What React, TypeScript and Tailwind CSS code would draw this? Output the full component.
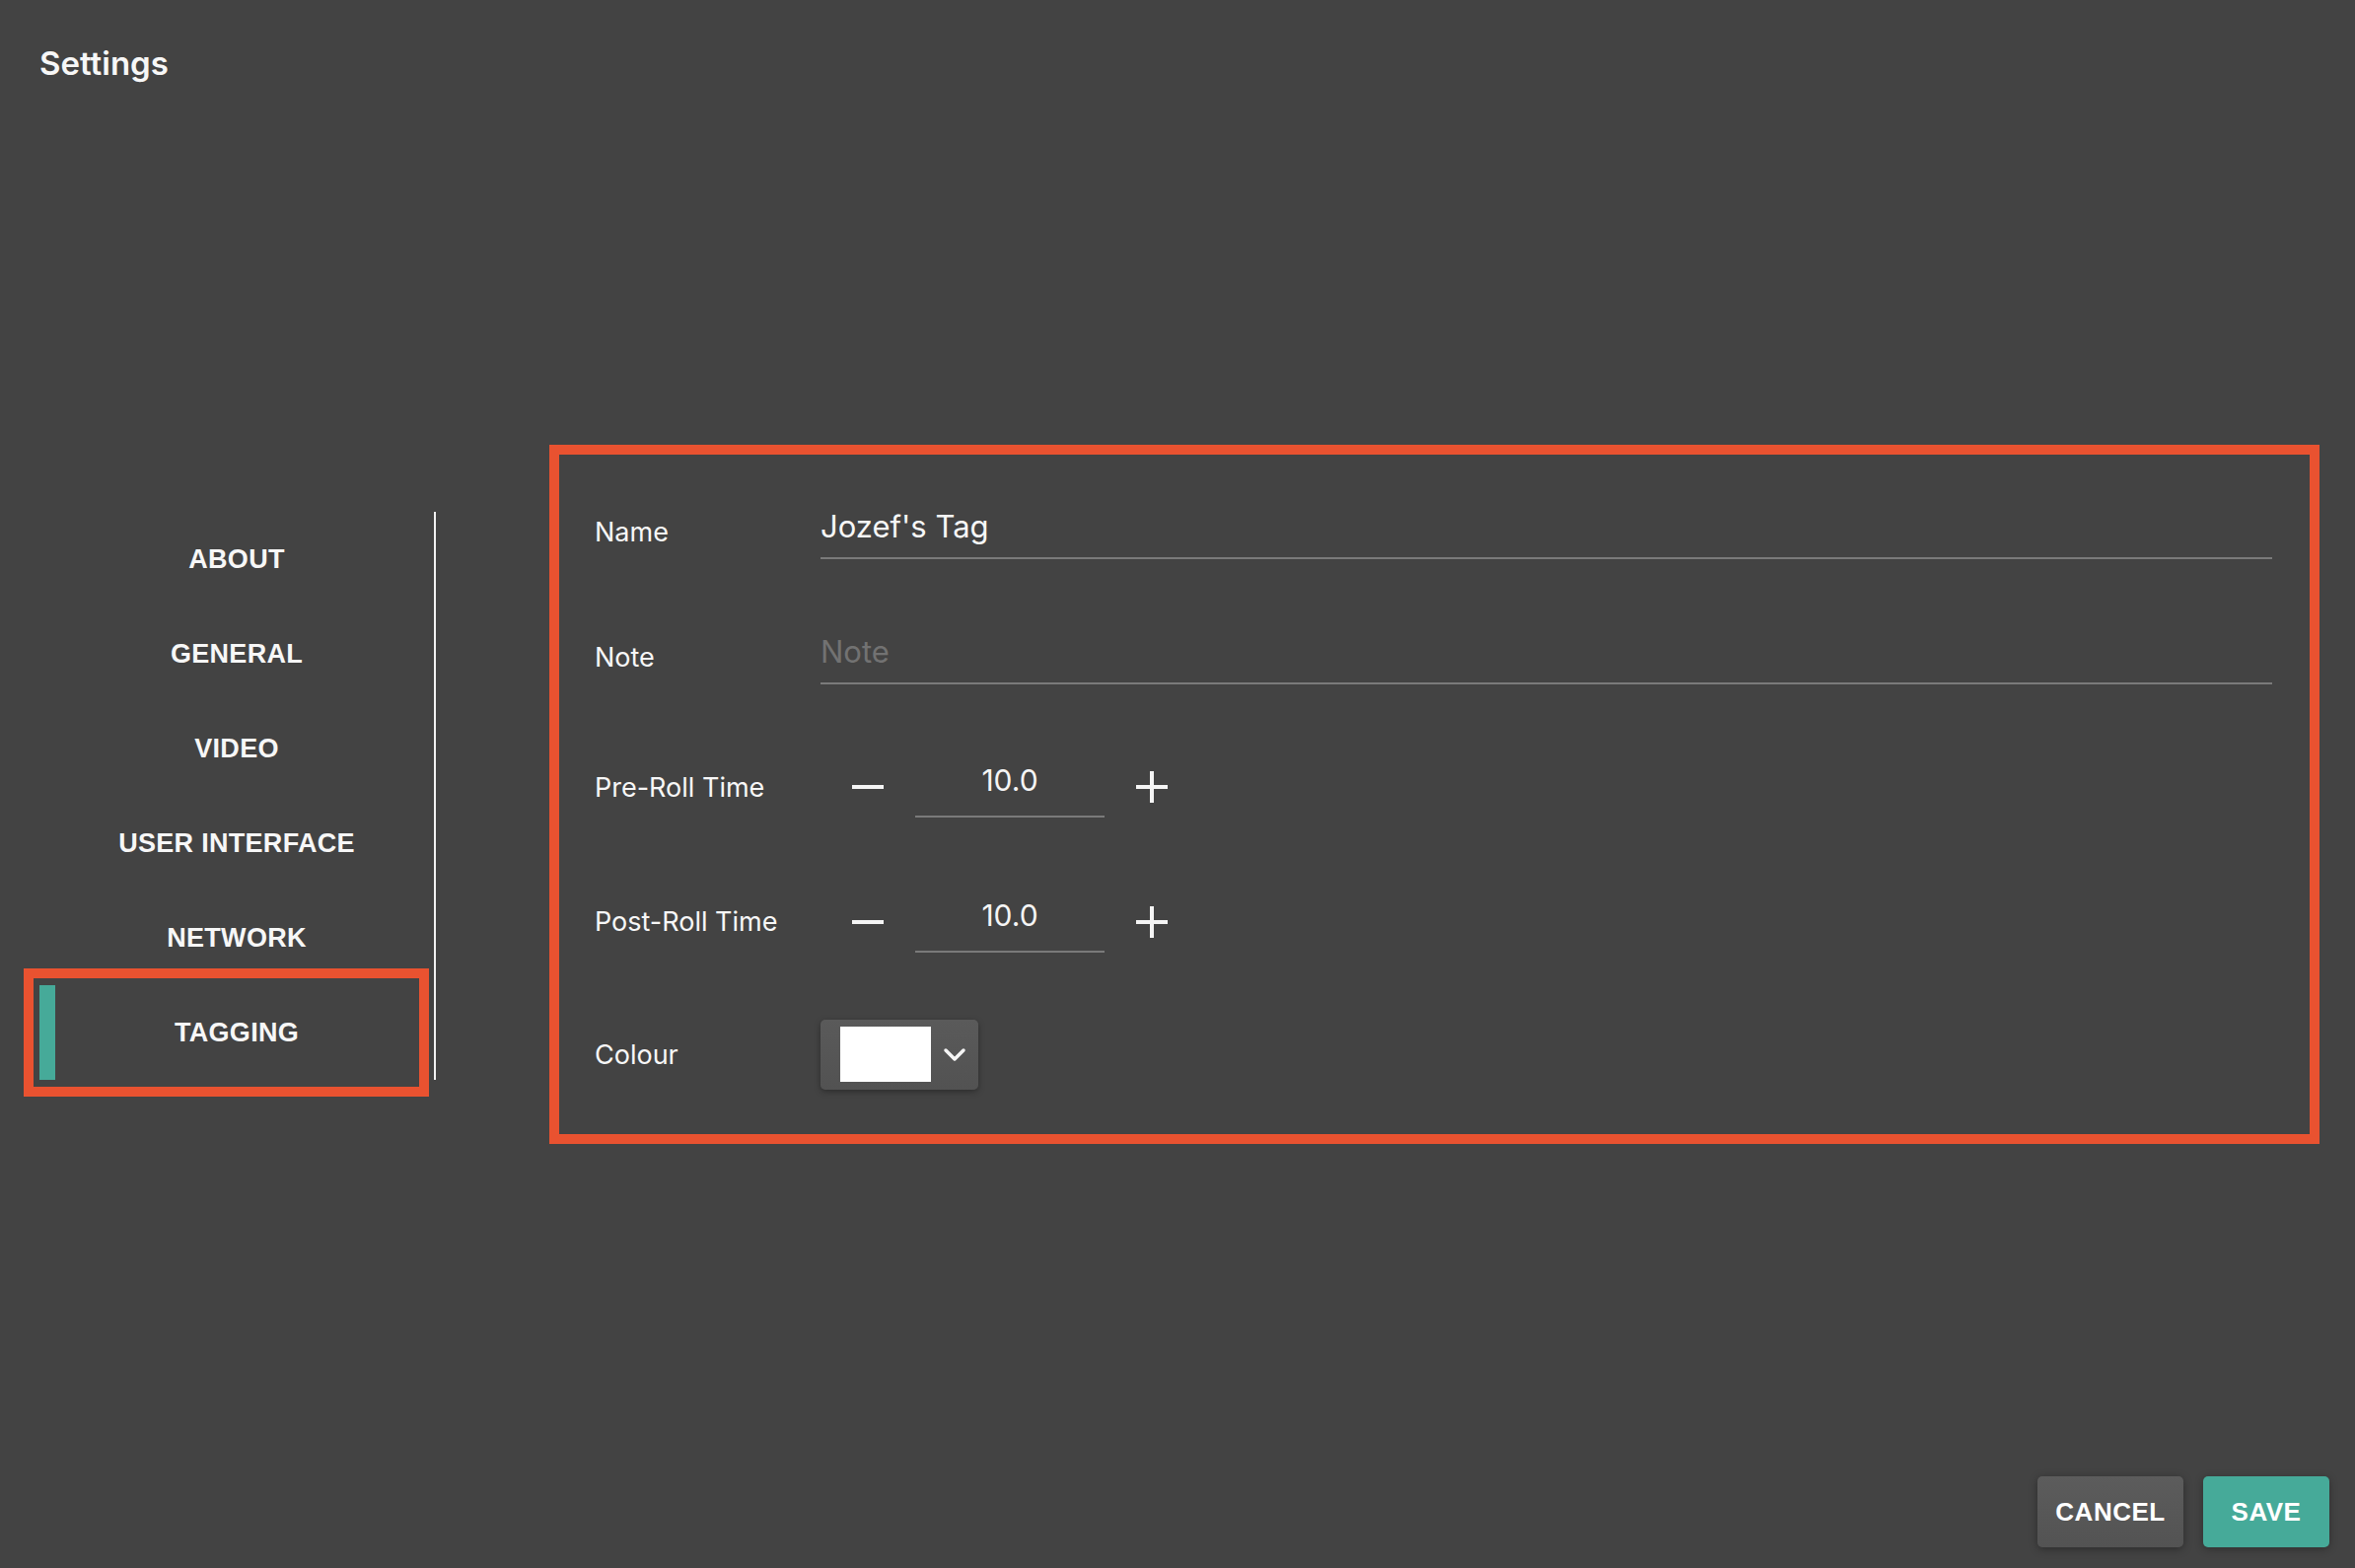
import React from "react";

const navItems = ["ABOUT", "GENERAL", "VIDEO", "USER INTERFACE", "NETWORK", "TAGGING"];

function Minus() {
  return <div className="h-[4px] w-[32px] bg-[#f5f5f5]" />;
}

function Plus() {
  return (
    <div className="relative h-[32px] w-[32px]">
      <div className="absolute left-0 top-[14px] h-[4px] w-[32px] bg-[#f5f5f5]" />
      <div className="absolute left-[14px] top-0 h-[32px] w-[4px] bg-[#f5f5f5]" />
    </div>
  );
}

function Stepper({ value }: { value: string }) {
  return (
    <div className="flex items-center">
      <div className="ml-[32px]">
        <Minus />
      </div>
      <div className="ml-[32px] w-[192px] border-b-2 border-[#7a7a7a] pb-[16px] pt-[3px] text-center text-[30px] leading-[40px] text-[#f5f5f5]">
        {value}
      </div>
      <div className="ml-[32px]">
        <Plus />
      </div>
    </div>
  );
}

export default function App() {
  const inter = { fontFamily: "Inter, 'Noto Sans', sans-serif" };
  const arial = { fontFamily: "'Liberation Sans', Arial, sans-serif" };
  return (
    <div className="flex h-[1590px] w-[2388px] flex-col overflow-hidden bg-[#434343] text-[#f7f7f7]" style={inter}>
      <div className="px-[40px] pt-[44px] text-[33px] font-semibold leading-[40px]">Settings</div>

      <div className="mt-[367px] flex items-start pl-[40px] pr-[36px]">
        <nav className="mt-[68px] w-[402px] border-r-2 border-[#f2f2f2]" style={arial}>
          {navItems.map((item) => (
            <div
              key={item}
              className="relative flex h-[96px] items-center justify-center text-[27px] font-bold tracking-[0.3px]"
            >
              {item === "TAGGING" && (
                <>
                  <div className="absolute bottom-0 left-0 top-0 w-[16px] bg-[#46aa99]" />
                  <div className="pointer-events-none absolute left-[-16px] top-[-17px] h-[130px] w-[411px] border-[10px] border-[#e95230]" />
                </>
              )}
              <span className="pt-[1px]">{item}</span>
            </div>
          ))}
        </nav>

        <div className="ml-[115px] flex flex-1 flex-col border-[10px] border-[#e95230] pb-[16px] pl-[36px] pr-[38px] pt-[15px]">
          <div className="flex h-[128px] items-center">
            <div className="w-[229px] text-[27px] leading-[32px]">Name</div>
            <div className="flex-1 border-b-2 border-[#7a7a7a] pb-[11px] text-[31px] leading-[40px] text-[#f7f7f7]">
              Jozef's Tag
            </div>
          </div>
          <div className="flex h-[126px] items-center">
            <div className="w-[229px] text-[27px] leading-[32px]">Note</div>
            <div className="flex-1 border-b-2 border-[#7a7a7a] pb-[11px] text-[31px] leading-[40px] text-[#727272]">
              Note
            </div>
          </div>
          <div className="flex h-[136px] items-center">
            <div className="w-[229px] pt-[2px] text-[27px] leading-[32px]">Pre-Roll Time</div>
            <Stepper value="10.0" />
          </div>
          <div className="flex h-[138px] items-center">
            <div className="w-[229px] text-[27px] leading-[32px]">Post-Roll Time</div>
            <Stepper value="10.0" />
          </div>
          <div className="flex h-[130px] items-center">
            <div className="w-[229px] pt-[2px] text-[27px] leading-[32px]">Colour</div>
            <div className="flex h-[71px] w-[160px] items-center rounded-[5px] bg-gradient-to-b from-[#5a5a5a] to-[#525252] pl-[20px] shadow-[0_2px_6px_rgba(0,0,0,0.35)]">
              <div className="h-[56px] w-[92px] bg-white" />
              <svg className="ml-[12px]" width="24" height="16" viewBox="0 0 24 16">
                <polyline
                  points="3,4 12,13 21,4"
                  fill="none"
                  stroke="#f5f5f5"
                  strokeWidth="3.5"
                  strokeLinecap="round"
                  strokeLinejoin="round"
                />
              </svg>
            </div>
          </div>
        </div>
      </div>

      <div className="mt-auto flex justify-end gap-[20px] pb-[21px] pr-[26px]" style={arial}>
        <button className="flex h-[72px] w-[148px] items-center justify-center rounded-[5px] bg-gradient-to-b from-[#5c5c5c] to-[#535353] text-[26px] font-bold tracking-[0.5px] text-white shadow-[0_2px_8px_rgba(0,0,0,0.35)]">
          CANCEL
        </button>
        <button className="flex h-[72px] w-[128px] items-center justify-center rounded-[5px] bg-[#46aa99] text-[26px] font-bold tracking-[0.5px] text-white shadow-[0_2px_8px_rgba(0,0,0,0.3)]">
          SAVE
        </button>
      </div>
    </div>
  );
}
